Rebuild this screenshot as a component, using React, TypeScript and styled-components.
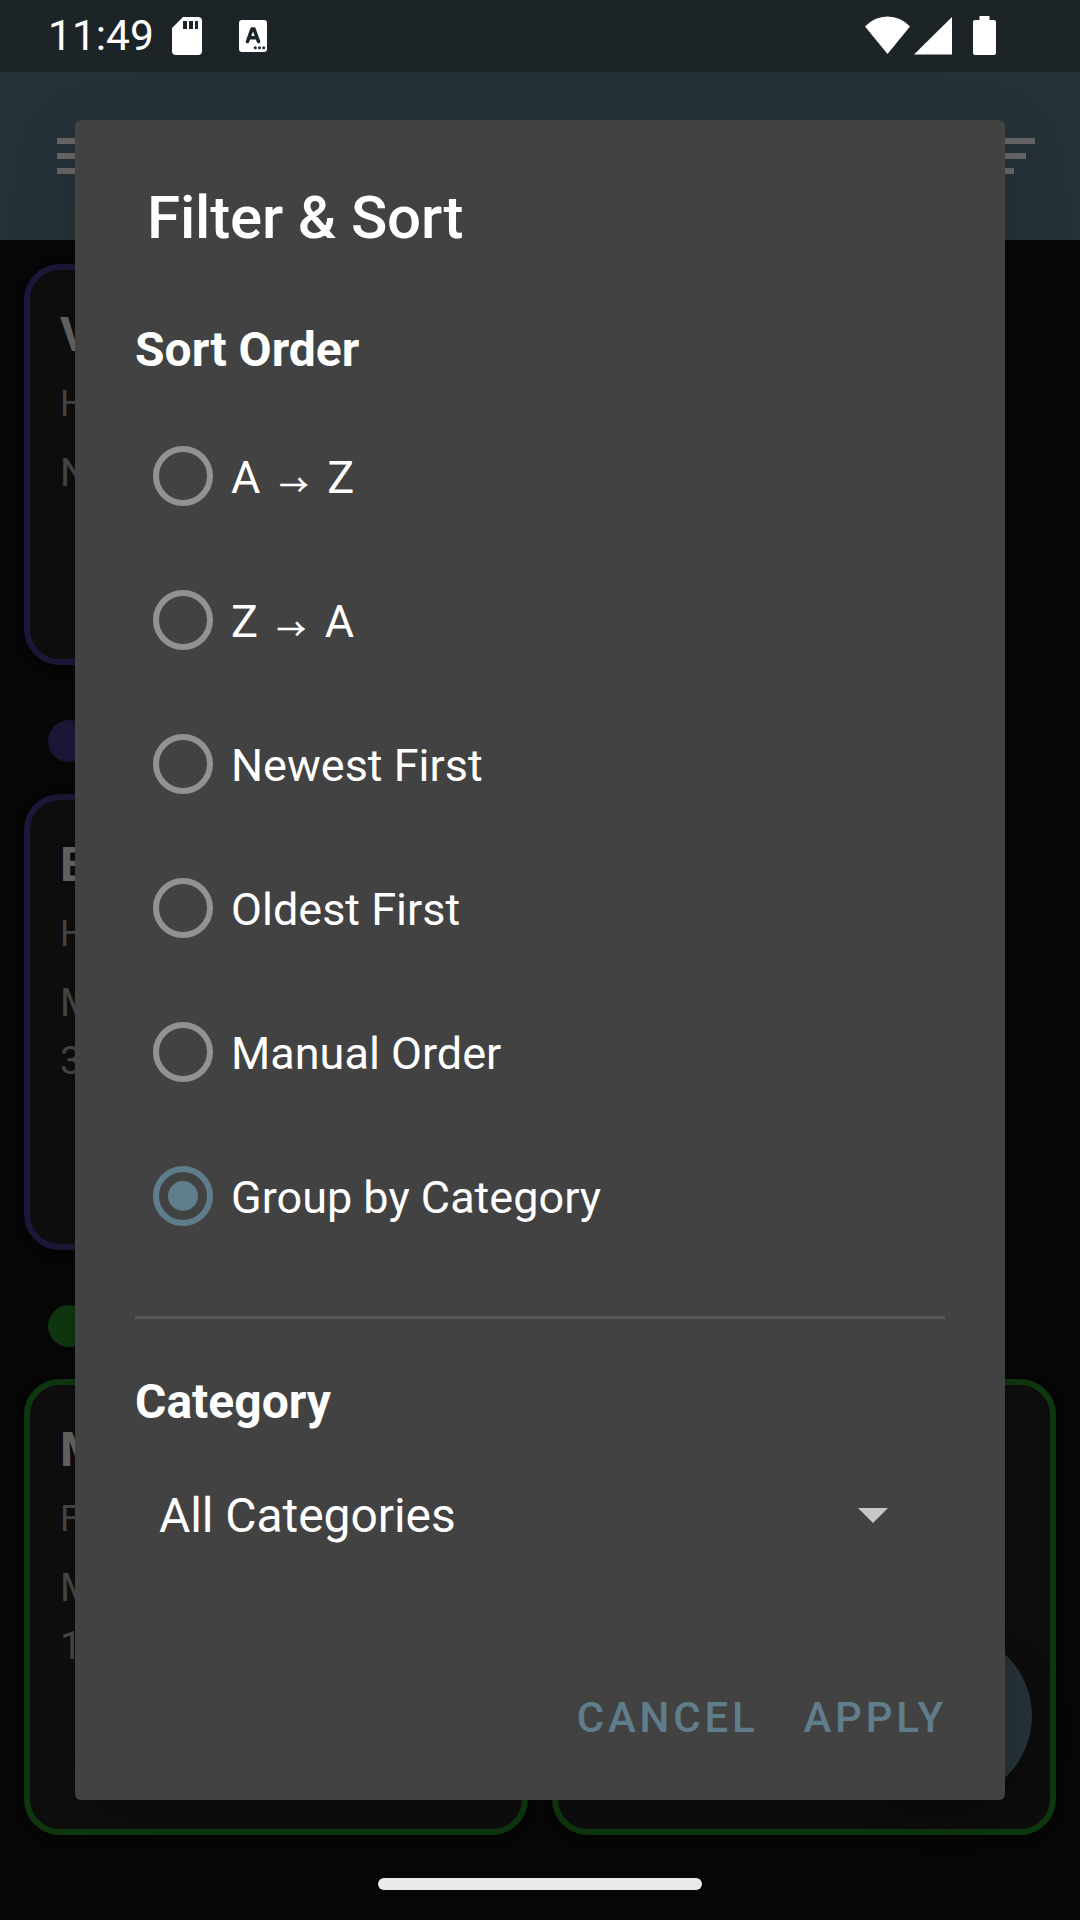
import React, { useState } from "react";
import styled, { createGlobalStyle } from "styled-components";

const GlobalStyle = createGlobalStyle`
  *, *::before, *::after { box-sizing: border-box; }
  html, body { margin: 0; padding: 0; background: #050505; }
  body { font-family: Roboto, "Liberation Sans", sans-serif; }
`;

const Screen = styled.div`
  position: relative;
  width: 1080px;
  height: 1920px;
  overflow: hidden;
  display: flex;
  flex-direction: column;
  background: #070707;
  color: #fff;
`;

const StatusBar = styled.header`
  flex: none;
  height: 72px;
  display: flex;
  align-items: flex-start;
  justify-content: space-between;
  padding: 0 84px 0 48px;
  background: #1d2427;
`;

const StatusGroup = styled.div`
  display: flex;
  align-items: flex-start;
`;

const Clock = styled.span`
  width: 124px;
  font-size: 42.5px;
  line-height: 50px;
  padding-top: 11px;
  white-space: nowrap;
`;

const StatusIcon = styled.svg<{ $top: number; $gap?: number }>`
  display: block;
  margin-top: ${(p) => p.$top}px;
  margin-left: ${(p) => p.$gap ?? 0}px;
  fill: #fff;
`;

const AppBar = styled.nav`
  flex: none;
  height: 168px;
  display: flex;
  align-items: flex-start;
  justify-content: space-between;
  padding: 66px 45px 0 57px;
  background: #263238;
`;

const BarIcon = styled.svg`
  display: block;
  fill: #666;
`;

const Notes = styled.main`
  flex: 1;
  display: flex;
  flex-direction: column;
  padding: 24px 24px 0;
`;

const CardRow = styled.div`
  display: grid;
  grid-template-columns: 504px 504px;
  gap: 24px;
`;

const Card = styled.article<{ $accent: string; $height: number }>`
  height: ${(p) => p.$height}px;
  border: 6px solid ${(p) => p.$accent};
  border-radius: 36px;
  background: #0e0e0e;
  padding: 37px 30px;
  box-shadow: 0 3px 9px rgba(0, 0, 0, 0.3);
`;

const CardTitle = styled.h3`
  margin: 0;
  font-size: 48px;
  line-height: 56px;
  font-weight: 700;
  color: #666;
`;

const CardMeta = styled.p`
  margin: 20px 0 0;
  font-size: 36px;
  line-height: 42px;
  color: #484848;
`;

const CardBody = styled.p`
  margin: 19px 0 0;
  font-size: 39px;
  line-height: 58px;
  color: #484848;
`;

const CategoryDot = styled.span<{ $color: string; $before: number; $after: number }>`
  width: 42px;
  height: 42px;
  margin: ${(p) => p.$before}px 0 ${(p) => p.$after}px 24px;
  border-radius: 50%;
  background: ${(p) => p.$color};
`;

const Fab = styled.button`
  position: absolute;
  right: 48px;
  bottom: 120px;
  width: 168px;
  height: 168px;
  border: 0;
  border-radius: 50%;
  background: #263238;
  box-shadow: 0 18px 36px rgba(0, 0, 0, 0.3);
`;

const HomeHandle = styled.div`
  position: absolute;
  left: 378px;
  bottom: 30px;
  width: 324px;
  height: 12px;
  border-radius: 6px;
  background: #ebebeb;
`;

const Dialog = styled.section`
  position: absolute;
  left: 75px;
  top: 120px;
  width: 930px;
  height: 1680px;
  display: flex;
  flex-direction: column;
  padding: 63px 60px 0;
  border-radius: 6px;
  background: #424242;
  box-shadow: 0 20px 72px rgba(0, 0, 0, 0.16);
`;

const DialogTitle = styled.h1`
  margin: 0 0 69px 12px;
  font-size: 60px;
  line-height: 70px;
  font-weight: 500;
  letter-spacing: -0.15px;
`;

const SectionTitle = styled.h2`
  margin: 0;
  font-size: 48px;
  line-height: 56px;
  font-weight: 700;
`;

const RadioGroup = styled.div`
  margin-top: 26px;
  display: flex;
  flex-direction: column;
`;

const RadioRow = styled.div`
  height: 144px;
  display: flex;
  align-items: center;
  gap: 18px;
  padding-left: 18px;
  cursor: pointer;
`;

const RadioRing = styled.span<{ $on: boolean }>`
  width: 60px;
  height: 60px;
  display: grid;
  place-items: center;
  border: 6px solid ${(p) => (p.$on ? "#607d8b" : "#929292")};
  border-radius: 50%;
`;

const RadioDot = styled.span`
  width: 30px;
  height: 30px;
  border-radius: 50%;
  background: #607d8b;
`;

const RadioLabel = styled.span`
  padding-top: 3px;
  font-size: 45px;
  line-height: 54px;
  white-space: pre;
`;

const Arrow = styled.span`
  display: inline-block;
  width: 44.5px;
  line-height: 1;
  text-align: center;
  vertical-align: -3px;
  font-family: "Noto Sans CJK JP", sans-serif;
  font-size: 29px;
  -webkit-text-stroke: 0.4px #fff;
`;

const Divider = styled.hr`
  width: 810px;
  height: 3px;
  margin: 48px 0 55px;
  border: 0;
  background: #585858;
`;

const Spinner = styled.div`
  margin-top: 50px;
  height: 72px;
  display: flex;
  align-items: center;
  justify-content: space-between;
  padding: 0 57px 0 24px;
  font-size: 48px;
  line-height: 72px;
  letter-spacing: -0.07px;
`;

const Caret = styled.svg`
  display: block;
  margin-bottom: 2px;
  fill: #c6c6c6;
`;

const Actions = styled.div`
  margin: 141px -2px 0 0;
  display: flex;
  justify-content: flex-end;
  gap: 45px;
`;

const ActionButton = styled.button`
  padding: 0;
  border: 0;
  background: none;
  color: #607d8b;
  font-family: inherit;
  font-size: 42px;
  line-height: 50px;
  font-weight: 500;
  letter-spacing: 3.8px;
`;

const options: { id: string; label: React.ReactNode }[] = [
  { id: "az", label: <>A <Arrow>→</Arrow> Z</> },
  { id: "za", label: <>Z <Arrow>→</Arrow> A</> },
  { id: "newest", label: "Newest First" },
  { id: "oldest", label: "Oldest First" },
  { id: "manual", label: "Manual Order" },
  { id: "group", label: "Group by Category" },
];

export default function App() {
  const [order, setOrder] = useState("group");
  return (
    <>
      <GlobalStyle />
      <Screen>
        <StatusBar>
          <StatusGroup>
            <Clock>11:49</Clock>
            <StatusIcon $top={17} width="30" height="38" viewBox="0 0 30 38">
              <path fillRule="evenodd" d="M11 0H26Q30 0 30 4V34Q30 38 26 38H4Q0 38 0 34V11ZM11 4V12H15V4ZM17 4V12H21V4ZM23 4V12H26V4Z" />
            </StatusIcon>
            <StatusIcon $top={20} $gap={37} width="28" height="32" viewBox="0 0 28 32">
              <rect width="28" height="32" rx="3" />
              <path d="M8.500 21.500L13 9H15L19.500 21.500M10.500 17.700H17.500" fill="none" stroke="#1d2427" strokeWidth="3.6" strokeLinejoin="round" strokeLinecap="round" />
              <g fill="#1d2427">
                <circle cx="16.3" cy="27.7" r="1.5" />
                <circle cx="20.5" cy="27.7" r="1.5" />
                <circle cx="24.7" cy="27.7" r="1.5" />
              </g>
            </StatusIcon>
          </StatusGroup>
          <StatusGroup>
            <StatusIcon $top={16} width="45" height="38" viewBox="0 0 45 38">
              <path d="M0 10.5Q9.500 0.500 22.500 0.500T45 10.500L22.500 38Z" />
            </StatusIcon>
            <StatusIcon $top={16} $gap={4} width="38" height="39" viewBox="0 0 38 39">
              <path d="M38 1V38.500H0Z" />
            </StatusIcon>
            <StatusIcon $top={16} $gap={21} width="23" height="39" viewBox="0 0 23 39">
              <path d="M6.500 0H16.500V4H21Q23 4 23 6V37Q23 39 21 39H2Q0 39 0 37V6Q0 4 2 4H6.500Z" />
            </StatusIcon>
          </StatusGroup>
        </StatusBar>
        <AppBar>
          <BarIcon width="54" height="36" viewBox="0 0 54 36">
            <path d="M0 0H54V6H0ZM0 15H54V21H0ZM0 30H54V36H0Z" />
          </BarIcon>
          <BarIcon width="54" height="36" viewBox="0 0 54 36">
            <path d="M0 0H54V6H0ZM0 15H45V21H0ZM0 30H33V36H0Z" />
          </BarIcon>
        </AppBar>
        <Notes>
          <CardRow>
            <Card $accent="#1e1739" $height={401}>
              <CardTitle>V</CardTitle>
              <CardMeta>H</CardMeta>
              <CardBody>N</CardBody>
            </Card>
          </CardRow>
          <CategoryDot $color="#1e1739" $before={55} $after={32} />
          <CardRow>
            <Card $accent="#1e1739" $height={456}>
              <CardTitle>E</CardTitle>
              <CardMeta>H</CardMeta>
              <CardBody>M<br />3</CardBody>
            </Card>
          </CardRow>
          <CategoryDot $color="#0f3810" $before={55} $after={32} />
          <CardRow>
            <Card $accent="#0f3810" $height={456}>
              <CardTitle>M</CardTitle>
              <CardMeta>F</CardMeta>
              <CardBody>M<br />1</CardBody>
            </Card>
            <Card $accent="#0f3810" $height={456} />
          </CardRow>
        </Notes>
        <Fab aria-label="Add" />
        <HomeHandle />
        <Dialog role="dialog">
          <DialogTitle>Filter &amp; Sort</DialogTitle>
          <SectionTitle>Sort Order</SectionTitle>
          <RadioGroup role="radiogroup">
            {options.map((o) => (
              <RadioRow key={o.id} role="radio" aria-checked={order === o.id} onClick={() => setOrder(o.id)}>
                <RadioRing $on={order === o.id}>{order === o.id && <RadioDot />}</RadioRing>
                <RadioLabel>{o.label}</RadioLabel>
              </RadioRow>
            ))}
          </RadioGroup>
          <Divider />
          <SectionTitle>Category</SectionTitle>
          <Spinner>
            All Categories
            <Caret width="30" height="15" viewBox="0 0 30 15">
              <path d="M0 0H30L15 15Z" />
            </Caret>
          </Spinner>
          <Actions>
            <ActionButton>CANCEL</ActionButton>
            <ActionButton>APPLY</ActionButton>
          </Actions>
        </Dialog>
      </Screen>
    </>
  );
}
